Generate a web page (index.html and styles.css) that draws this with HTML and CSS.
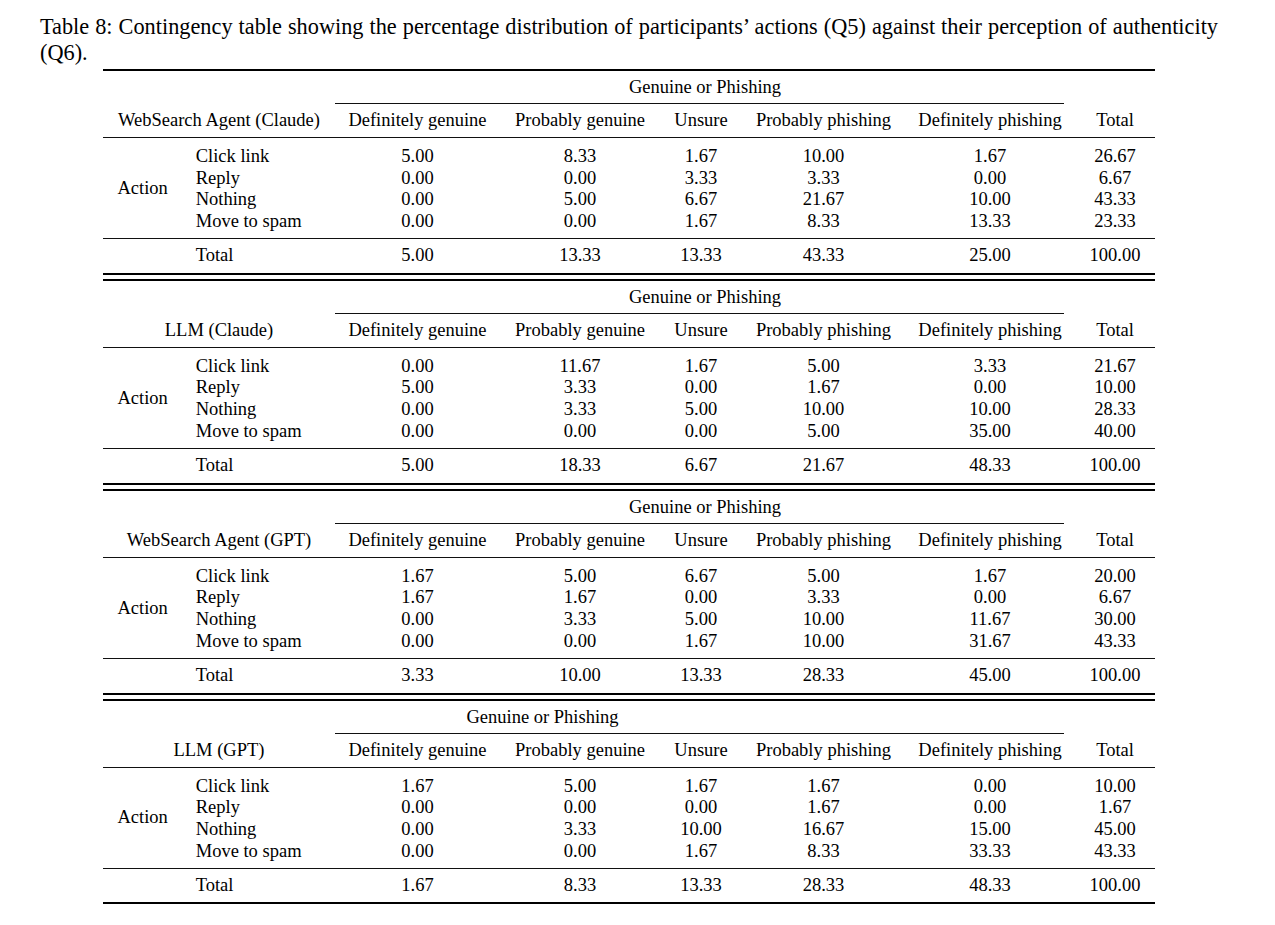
FILE: index.html
```html
<!DOCTYPE html>
<html lang="en">
<head>
<meta charset="utf-8">
<title>Table 8</title>
<link rel="stylesheet" href="styles.css">
</head>
<body>
<div class="page">
  <p class="caption">Table 8: Contingency table showing the percentage distribution of participants’ actions (Q5) against their perception of authenticity (Q6).</p>

  <table class="ct">
    <colgroup><col class="c-a"><col class="c-b"><col class="c-dg"><col class="c-pg"><col class="c-un"><col class="c-pp"><col class="c-dp"><col class="c-tot"></colgroup>
    <tr class="gop"><td colspan="2"></td><td colspan="5"><div class="cm trim full">Genuine or Phishing</div></td><td></td></tr>
    <tr class="head"><td colspan="2">WebSearch Agent (Claude)</td><td>Definitely genuine</td><td>Probably genuine</td><td>Unsure</td><td>Probably phishing</td><td>Definitely phishing</td><td>Total</td></tr>
    <tr class="r1"><td class="action" rowspan="4">Action</td><td class="lab">Click link</td><td>5.00</td><td>8.33</td><td>1.67</td><td>10.00</td><td>1.67</td><td>26.67</td></tr>
    <tr><td class="lab">Reply</td><td>0.00</td><td>0.00</td><td>3.33</td><td>3.33</td><td>0.00</td><td>6.67</td></tr>
    <tr><td class="lab">Nothing</td><td>0.00</td><td>5.00</td><td>6.67</td><td>21.67</td><td>10.00</td><td>43.33</td></tr>
    <tr class="r4"><td class="lab">Move to spam</td><td>0.00</td><td>0.00</td><td>1.67</td><td>8.33</td><td>13.33</td><td>23.33</td></tr>
    <tr class="tot"><td></td><td class="lab">Total</td><td>5.00</td><td>13.33</td><td>13.33</td><td>43.33</td><td>25.00</td><td>100.00</td></tr>
  </table>

  <table class="ct">
    <colgroup><col class="c-a"><col class="c-b"><col class="c-dg"><col class="c-pg"><col class="c-un"><col class="c-pp"><col class="c-dp"><col class="c-tot"></colgroup>
    <tr class="gop"><td colspan="2"></td><td colspan="5"><div class="cm trim full">Genuine or Phishing</div></td><td></td></tr>
    <tr class="head"><td colspan="2">LLM (Claude)</td><td>Definitely genuine</td><td>Probably genuine</td><td>Unsure</td><td>Probably phishing</td><td>Definitely phishing</td><td>Total</td></tr>
    <tr class="r1"><td class="action" rowspan="4">Action</td><td class="lab">Click link</td><td>0.00</td><td>11.67</td><td>1.67</td><td>5.00</td><td>3.33</td><td>21.67</td></tr>
    <tr><td class="lab">Reply</td><td>5.00</td><td>3.33</td><td>0.00</td><td>1.67</td><td>0.00</td><td>10.00</td></tr>
    <tr><td class="lab">Nothing</td><td>0.00</td><td>3.33</td><td>5.00</td><td>10.00</td><td>10.00</td><td>28.33</td></tr>
    <tr class="r4"><td class="lab">Move to spam</td><td>0.00</td><td>0.00</td><td>0.00</td><td>5.00</td><td>35.00</td><td>40.00</td></tr>
    <tr class="tot"><td></td><td class="lab">Total</td><td>5.00</td><td>18.33</td><td>6.67</td><td>21.67</td><td>48.33</td><td>100.00</td></tr>
  </table>

  <table class="ct">
    <colgroup><col class="c-a"><col class="c-b"><col class="c-dg"><col class="c-pg"><col class="c-un"><col class="c-pp"><col class="c-dp"><col class="c-tot"></colgroup>
    <tr class="gop"><td colspan="2"></td><td colspan="5"><div class="cm trim full">Genuine or Phishing</div></td><td></td></tr>
    <tr class="head"><td colspan="2">WebSearch Agent (GPT)</td><td>Definitely genuine</td><td>Probably genuine</td><td>Unsure</td><td>Probably phishing</td><td>Definitely phishing</td><td>Total</td></tr>
    <tr class="r1"><td class="action" rowspan="4">Action</td><td class="lab">Click link</td><td>1.67</td><td>5.00</td><td>6.67</td><td>5.00</td><td>1.67</td><td>20.00</td></tr>
    <tr><td class="lab">Reply</td><td>1.67</td><td>1.67</td><td>0.00</td><td>3.33</td><td>0.00</td><td>6.67</td></tr>
    <tr><td class="lab">Nothing</td><td>0.00</td><td>3.33</td><td>5.00</td><td>10.00</td><td>11.67</td><td>30.00</td></tr>
    <tr class="r4"><td class="lab">Move to spam</td><td>0.00</td><td>0.00</td><td>1.67</td><td>10.00</td><td>31.67</td><td>43.33</td></tr>
    <tr class="tot"><td></td><td class="lab">Total</td><td>3.33</td><td>10.00</td><td>13.33</td><td>28.33</td><td>45.00</td><td>100.00</td></tr>
  </table>

  <table class="ct">
    <colgroup><col class="c-a"><col class="c-b"><col class="c-dg"><col class="c-pg"><col class="c-un"><col class="c-pp"><col class="c-dp"><col class="c-tot"></colgroup>
    <tr class="gop"><td colspan="2"></td><td colspan="3"><div class="cm shift">Genuine or Phishing</div></td><td colspan="2"><div class="cm trim">&nbsp;</div></td><td></td></tr>
    <tr class="head"><td colspan="2">LLM (GPT)</td><td>Definitely genuine</td><td>Probably genuine</td><td>Unsure</td><td>Probably phishing</td><td>Definitely phishing</td><td>Total</td></tr>
    <tr class="r1"><td class="action" rowspan="4">Action</td><td class="lab">Click link</td><td>1.67</td><td>5.00</td><td>1.67</td><td>1.67</td><td>0.00</td><td>10.00</td></tr>
    <tr><td class="lab">Reply</td><td>0.00</td><td>0.00</td><td>0.00</td><td>1.67</td><td>0.00</td><td>1.67</td></tr>
    <tr><td class="lab">Nothing</td><td>0.00</td><td>3.33</td><td>10.00</td><td>16.67</td><td>15.00</td><td>45.00</td></tr>
    <tr class="r4"><td class="lab">Move to spam</td><td>0.00</td><td>0.00</td><td>1.67</td><td>8.33</td><td>33.33</td><td>43.33</td></tr>
    <tr class="tot"><td></td><td class="lab">Total</td><td>1.67</td><td>8.33</td><td>13.33</td><td>28.33</td><td>48.33</td><td>100.00</td></tr>
  </table>
</div>
</body>
</html>
```

FILE: styles.css
```css
body {
  margin: 0;
  background: #fff;
  color: #000;
  font-family: "Liberation Serif", "Times New Roman", serif;
}

.page {
  width: 1178px;
  padding: 13.6px 0 0 40px;
}

.caption {
  margin: 0;
  font-size: 22.3px;
  line-height: 26.5px;
  text-align: justify;
}

.ct {
  margin: 2.4px 0 0 63px;
  width: 1052px;
  table-layout: fixed;
  border-collapse: separate;
  border-spacing: 0;
  font-size: 18.5px;
  line-height: 21.67px;
}

.ct + .ct {
  margin-top: 4px;
}

.c-a { width: 79px; }
.c-b { width: 153px; }
.c-dg { width: 165px; }
.c-pg { width: 160px; }
.c-un { width: 82px; }
.c-pp { width: 163px; }
.c-dp { width: 170px; }
.c-tot { width: 80px; }

.ct td {
  padding: 0;
  text-align: center;
  vertical-align: top;
  white-space: nowrap;
}

/* toprule + spanning header */
.gop td {
  border-top: 2px solid #000;
}

.cm {
  padding: 6.4px 0 3.9px;
  border-bottom: 1px solid #111;
}

.cm.trim {
  margin-right: 11px;
}

.cm.full {
  padding-left: 11px;
}

.cm.shift {
  padding-left: 8px;
}

/* column header row + midrule */
.head td {
  padding: 6px 0 5.3px;
  border-bottom: 1px solid #111;
}

/* body rows */
.r1 td {
  padding-top: 8px;
}

.r4 td {
  padding-bottom: 5.3px;
  border-bottom: 1px solid #111;
}

.ct td.action {
  padding: 1.4px 0 0 14.5px;
  text-align: left;
  vertical-align: middle;
  border-bottom: 1px solid #111;
}

.ct td.lab {
  text-align: left;
  padding-left: 13.7px;
}

/* total row + bottomrule */
.tot td {
  padding: 6px 0 6.3px;
  border-bottom: 2px solid #000;
}
```
